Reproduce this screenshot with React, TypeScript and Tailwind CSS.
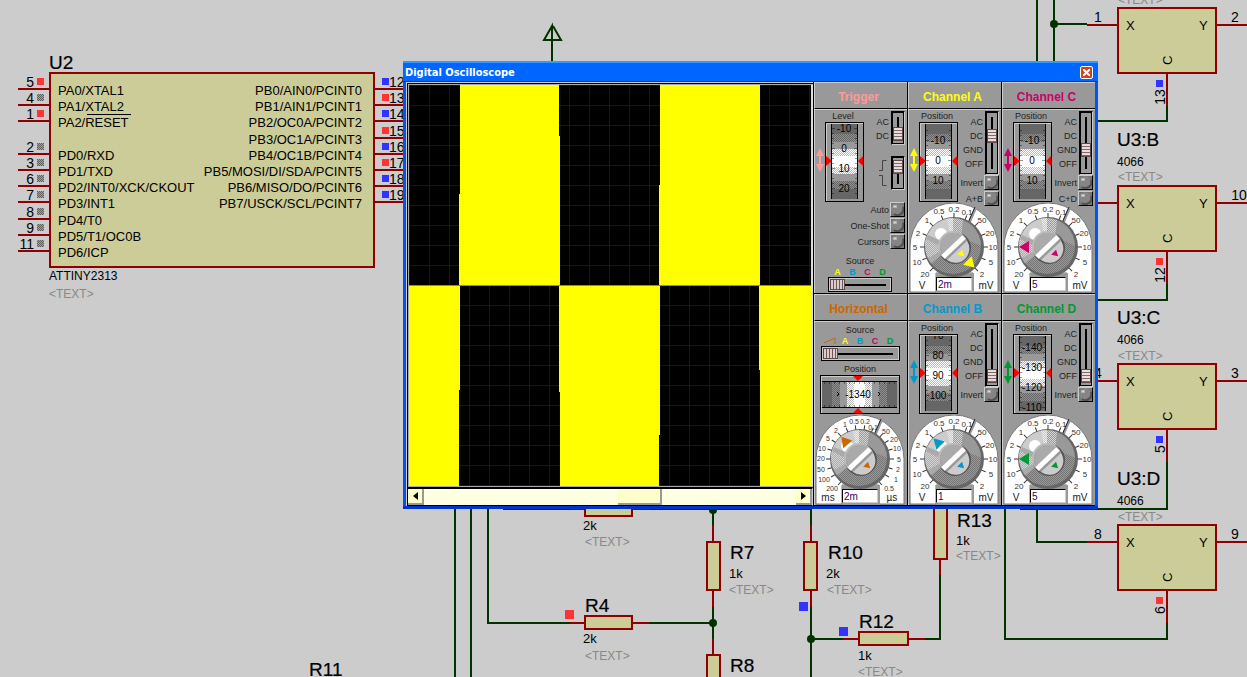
import { useId } from "react";
import clsx from "clsx";

const RED = "#900000";
const GREEN = "#003300";
const HIGH = "#ff3333";
const LOW = "#3333ff";
const FLOATING = "url(#floating)";

/* ---------- Schematic ---------- */

const leftPins = [
  { num: "5", name: "PA0/XTAL1", y: 89, state: HIGH },
  { num: "4", name: "PA1/XTAL2", y: 105, state: FLOATING },
  { num: "1", name: "PA2/RESET", y: 121, state: HIGH },
  { num: "2", name: "PD0/RXD", y: 154, state: FLOATING },
  { num: "3", name: "PD1/TXD", y: 170, state: FLOATING },
  { num: "6", name: "PD2/INT0/XCK/CKOUT", y: 186, state: FLOATING },
  { num: "7", name: "PD3/INT1", y: 202, state: FLOATING },
  { num: "8", name: "PD4/T0", y: 219, state: FLOATING },
  { num: "9", name: "PD5/T1/OC0B", y: 235, state: FLOATING },
  { num: "11", name: "PD6/ICP", y: 251, state: FLOATING },
];

const rightPins = [
  { num: "12", name: "PB0/AIN0/PCINT0", y: 89, state: LOW },
  { num: "13", name: "PB1/AIN1/PCINT1", y: 105, state: HIGH },
  { num: "14", name: "PB2/OC0A/PCINT2", y: 121, state: LOW },
  { num: "15", name: "PB3/OC1A/PCINT3", y: 138, state: HIGH },
  { num: "16", name: "PB4/OC1B/PCINT4", y: 154, state: LOW },
  { num: "17", name: "PB5/MOSI/DI/SDA/PCINT5", y: 170, state: HIGH },
  { num: "18", name: "PB6/MISO/DO/PCINT6", y: 186, state: LOW },
  { num: "19", name: "PB7/USCK/SCL/PCINT7", y: 202, state: LOW },
];

const switches = [
  { y: 8, pinX: "1", pinY: "2", pinC: "13", state: LOW },
  { y: 186, name: "U3:B", pinX: "", pinY: "10", pinC: "12", state: HIGH },
  { y: 364, name: "U3:C", pinX: "4", pinY: "3", pinC: "5", state: LOW },
  { y: 525, name: "U3:D", pinX: "8", pinY: "9", pinC: "6", state: HIGH },
];

const wires = [
  "M1037 0V62",
  "M1054 0V62",
  "M1054 24H1087",
  "M1167 106V121H1090",
  "M1167 284V300H1090",
  "M1167 462V509H1020",
  "M1167 623V639H1005V508",
  "M1037 508V542H1087",
  "M552 61V26L544 40H561L553 26",
  "M455 508V677",
  "M471 508V677",
  "M488 508V623H570",
  "M649 623H713",
  "M503 509H570",
  "M650 509H811V525",
  "M713 509V525",
  "M713 607V639",
  "M811 607V677",
  "M811 639H843",
  "M925 639H940V575",
];

const leads = [
  "M570 509H650",
  "M570 623H649",
  "M713 525V607",
  "M713 639V660",
  "M811 525V607",
  "M843 639H925",
  "M940 575V550",
];

const resistors = [
  { x: 585, y: 503, w: 47, h: 13 },
  { x: 585, y: 616, w: 47, h: 13 },
  { x: 707, y: 542, w: 13, h: 48 },
  { x: 707, y: 655, w: 13, h: 48 },
  { x: 804, y: 542, w: 13, h: 48 },
  { x: 859, y: 632, w: 49, h: 13 },
  { x: 934, y: 508, w: 13, h: 51 },
];

const junctions = [
  [1054, 24],
  [713, 510],
  [713, 623],
  [811, 639],
];

const probes = [
  { x: 565, y: 610, state: HIGH },
  { x: 799, y: 602, state: LOW },
  { x: 839, y: 627, state: LOW },
];

const refs: [string, number, number][] = [
  ["U2", 49, 69],
  ["R4", 585, 612],
  ["R7", 730, 559],
  ["R8", 730, 672],
  ["R10", 828, 559],
  ["R12", 859, 628],
  ["R13", 957, 527],
  ["R11", 309, 676],
];

const values: [string, number, number][] = [
  ["2k", 583, 530],
  ["2k", 583, 643],
  ["1k", 729, 578],
  ["2k", 826, 578],
  ["1k", 858, 660],
  ["1k", 956, 545],
];

const placeholders = [
  [49, 298],
  [585, 546],
  [585, 660],
  [729, 594],
  [827, 594],
  [858, 676],
  [956, 560],
  [1118, 4],
  [1118, 181],
  [1118, 360],
  [1118, 521],
];

function Schematic() {
  return (
    <svg
      width="1247"
      height="677"
      className="absolute top-0 left-0 overflow-visible"
      fontFamily="'Liberation Sans', Arial, sans-serif"
    >
      <defs>
        <pattern id="floating" width="2" height="2" patternUnits="userSpaceOnUse">
          <rect width="2" height="2" fill="#a0a0a0" />
          <path d="M0 0h1v1h1v1h-1v-1h-1z" fill="#606060" />
        </pattern>
        <pattern id="dither-light" width="2" height="2" patternUnits="userSpaceOnUse">
          <path d="M0 0h1v1h-1zM1 1h1v1h-1z" fill="#ffffff" />
        </pattern>
        <pattern id="dither-dark" width="2" height="2" patternUnits="userSpaceOnUse">
          <path d="M0 0h1v1h-1zM1 1h1v1h-1z" fill="#666666" />
        </pattern>
      </defs>

      <g fill="none" stroke={GREEN} strokeWidth="2">
        {wires.map((d) => (
          <path key={d} d={d} />
        ))}
      </g>
      <g fill="none" stroke={RED} strokeWidth="2">
        {leads.map((d) => (
          <path key={d} d={d} />
        ))}
      </g>
      {junctions.map(([x, y]) => (
        <circle key={`${x}-${y}`} cx={x} cy={y} r="4" fill={GREEN} />
      ))}
      {resistors.map((r) => (
        <rect
          key={`${r.x}-${r.y}`}
          x={r.x}
          y={r.y}
          width={r.w}
          height={r.h}
          fill="#cccc99"
          stroke={RED}
          strokeWidth="2"
        />
      ))}
      {probes.map((p) => (
        <rect key={p.x} x={p.x} y={p.y} width="9" height="9" fill={p.state} />
      ))}

      {/* Microcontroller */}
      <rect x="50" y="73" width="324" height="194" fill="#cccc99" stroke={RED} strokeWidth="2" />
      {leftPins.map((pin) => (
        <g key={pin.num}>
          <path d={`M18 ${pin.y}H49`} stroke={RED} strokeWidth="2" />
          <rect x="37" y={pin.y - 11} width="7" height="7" fill={pin.state} />
          <text x="34" y={pin.y - 2} fontSize="14" textAnchor="end">
            {pin.num}
          </text>
          <text x="58" y={pin.y + 6} fontSize="13">
            {pin.name}
          </text>
        </g>
      ))}
      <path d="M87 114.500H131" stroke="#000" />
      {rightPins.map((pin) => (
        <g key={pin.num}>
          <path d={`M375 ${pin.y}H404`} stroke={RED} strokeWidth="2" />
          <rect x="382" y={pin.y - 11} width="7" height="7" fill={pin.state} />
          <text x="389" y={pin.y - 2} fontSize="14">
            {pin.num}
          </text>
          <text x="362" y={pin.y + 6} fontSize="13" textAnchor="end">
            {pin.name}
          </text>
        </g>
      ))}
      <text x="49" y="280" fontSize="12">
        ATTINY2313
      </text>

      {/* Analogue switches */}
      {switches.map((s) => (
        <g key={s.y} fontSize="13">
          <path
            d={`M1087 ${s.y + 17}H1118M1216 ${s.y + 17}H1247M1167 ${s.y + 65}V${s.y + 98}`}
            stroke={RED}
            strokeWidth="2"
          />
          <rect x="1118" y={s.y} width="98" height="65" fill="#cccc99" stroke={RED} strokeWidth="2" />
          <text x="1126" y={s.y + 22}>
            X
          </text>
          <text x="1199" y={s.y + 22}>
            Y
          </text>
          <text transform={`translate(1172 ${s.y + 57}) rotate(-90)`}>C</text>
          <text x="1098" y={s.y + 14} fontSize="14" textAnchor="middle">
            {s.pinX}
          </text>
          <text x={s.pinY.length > 1 ? 1239 : 1235} y={s.y + 14} fontSize="14" textAnchor="middle">
            {s.pinY}
          </text>
          <rect x="1156" y={s.y + 72} width="7" height="7" fill={s.state} />
          <text
            transform={`translate(1165 ${s.pinC.length > 1 ? s.y + 89 : s.y + 85}) rotate(-90)`}
            fontSize="14"
            textAnchor="middle"
          >
            {s.pinC}
          </text>
          {s.name && (
            <>
              <text x="1117" y={s.y - 40} fontSize="19" stroke="#000" strokeWidth="0.200">
                {s.name}
              </text>
              <text x="1117" y={s.y - 20} fontSize="12">
                4066
              </text>
            </>
          )}
        </g>
      ))}

      <g fontSize="19" stroke="#000" strokeWidth="0.200">
        {refs.map(([label, x, y]) => (
          <text key={label} x={x} y={y}>
            {label}
          </text>
        ))}
      </g>
      <g fontSize="13">
        {values.map(([label, x, y]) => (
          <text key={`${x}-${y}`} x={x} y={y}>
            {label}
          </text>
        ))}
      </g>
      <g fontSize="12" fill="#888888">
        {placeholders.map(([x, y]) => (
          <text key={`${x}-${y}`} x={x} y={y}>
            {"<TEXT>"}
          </text>
        ))}
      </g>
    </svg>
  );
}

/* ---------- Oscilloscope controls ---------- */

function Screen() {
  const lines = Array.from({ length: 21 }, (_, i) => i * 20);
  return (
    <svg width="402" height="401" className="block bg-black" shapeRendering="crispEdges">
      {lines.map((n) => (
        <path key={n} d={`M${n + 0.5} 0V401M0 ${n + 0.5}H402`} stroke="#002800" />
      ))}
      <g fill="#ffff00">
        <path d="M51 0H150V51H151V200H50V109H51z" />
        <path d="M251 0H351V200H250V100H251z" />
        <path d="M0 201H51V305H50V401H0z" />
        <path d="M150 201H251V350H250V401H151V307H150z" />
        <path d="M350 201H402V401H351V285H350z" />
      </g>
      <path d="M0 200.500H402" stroke="#cc6666" />
    </svg>
  );
}

function VSwitch({ label, max, value }: { label: string; max: number; value: number }) {
  return (
    <div
      className={clsx(
        "w-[14px] shrink-0 border border-black border-r-[#ccc] border-b-[#ccc] bg-[#999] bg-[linear-gradient(#000,#000)] bg-center bg-no-repeat py-[3px] outline-1 -outline-offset-2 outline-black",
        max === 3 ? "h-[64px] bg-[length:2px_52px]" : "h-[34px] bg-[length:2px_22px]"
      )}
    >
      <input
        type="range"
        aria-label={label}
        min={0}
        max={max}
        defaultValue={value}
        className="block h-full w-[12px] appearance-none bg-transparent [writing-mode:vertical-lr] [&::-webkit-slider-thumb]:h-[14px] [&::-webkit-slider-thumb]:w-[10px] [&::-webkit-slider-thumb]:appearance-none [&::-webkit-slider-thumb]:border [&::-webkit-slider-thumb]:border-[#604848] [&::-webkit-slider-thumb]:bg-[repeating-linear-gradient(#e8dcdc_0px_2px,#806868_2px_3px)]"
      />
    </div>
  );
}

function HSwitch({ label, max, wide }: { label: string; max: number; wide?: boolean }) {
  return (
    <div
      className={clsx(
        "h-[15px] border border-black bg-[#999] bg-[linear-gradient(#000,#000)] bg-center bg-no-repeat px-px outline-1 -outline-offset-2 outline-[#ccc]",
        wide ? "w-[79px] bg-[length:66px_2px]" : "w-[64px] bg-[length:52px_2px]"
      )}
    >
      <input
        type="range"
        aria-label={label}
        min={0}
        max={max}
        defaultValue={0}
        className="block h-[13px] w-full appearance-none bg-transparent [&::-webkit-slider-thumb]:h-[11px] [&::-webkit-slider-thumb]:w-[15px] [&::-webkit-slider-thumb]:appearance-none [&::-webkit-slider-thumb]:border [&::-webkit-slider-thumb]:border-[#604848] [&::-webkit-slider-thumb]:bg-[repeating-linear-gradient(90deg,#dccccc_0px_2px,#705858_2px_3px)]"
      />
    </div>
  );
}

function PushButton({ label }: { label: string }) {
  const id = useId();
  return (
    <div className="flex h-4 items-start justify-end gap-px">
      <label htmlFor={id} className="leading-4 whitespace-nowrap">
        {label}
      </label>
      <button
        id={id}
        type="button"
        className="size-[15px] shrink-0 border border-t-[#ccc] border-r-black border-b-black border-l-[#ccc] bg-[#777]"
      >
        <svg viewBox="0 0 13 13" className="block size-[13px]">
          <circle cx="6" cy="6" r="6" fill="#858585" />
          <path d="M12 4A6 6 0 0 1 3 11" fill="none" stroke="#505050" strokeWidth="2" />
          <path d="M3 2v3M5 2v3M3 3.500h2" stroke="#ddd" fill="none" />
        </svg>
      </button>
    </div>
  );
}

const bands = [
  { at: 0, size: 10, fill: "#666666" },
  { at: 10, size: 8, fill: "#909090", dither: "url(#dither-dark)" },
  { at: 18, size: 7, fill: "#999999" },
  { at: 25, size: 7, fill: "#bbbbbb", dither: "url(#dither-light)" },
  { at: 32, size: 11, fill: "#ffffff" },
  { at: 43, size: 7, fill: "#bbbbbb", dither: "url(#dither-light)" },
  { at: 50, size: 7, fill: "#999999" },
  { at: 57, size: 8, fill: "#909090", dither: "url(#dither-dark)" },
  { at: 65, size: 10, fill: "#666666" },
];

type Mark = [string, number];

function Wheel({ label, marks }: { label: string; marks: Mark[] }) {
  return (
    <div className="relative h-[80px] w-[39px]">
      <svg width="39" height="80" className="block">
        <g shapeRendering="crispEdges">
          <path d="M0 0h39v80h-39z" fill="#000" />
          <path d="M1 1h37v78h-37z" fill="#ccc" />
          <path d="M2 2h36v77h-36z" fill="#999" />
          <rect x="6" y="2" width="27" height="75" fill="#000" />
        </g>
        <svg x="7" y="2" width="25" height="75">
          {bands.map((b) => (
            <g key={b.at} shapeRendering="crispEdges">
              <rect y={b.at} width="25" height={b.size} fill={b.fill} />
              {b.dither && <rect y={b.at} width="25" height={b.size} fill={b.dither} />}
            </g>
          ))}
          {marks.map(([text, y]) =>
            [-10, -5, 0, 5].map((d) => (
              <path
                key={`${text}${d}`}
                d={`M0 ${y + d + 0.5}h${d ? 2 : 3}M25 ${y + d + 0.5}h${d ? -2 : -3}`}
                stroke="#000"
                opacity="0.4"
              />
            ))
          )}
          <g fontSize="10" textAnchor="middle">
            {marks.map(([text, y]) => (
              <text key={text} x="12" y={y + 4}>
                {text}
              </text>
            ))}
          </g>
        </svg>
        <path d="M1 34l6 5-6 5zM38 34l-5 5 5 5z" fill="#f00" />
      </svg>
      <input type="range" aria-label={label} className="absolute inset-0 h-full w-full opacity-0" />
    </div>
  );
}

function HWheel() {
  return (
    <div className="relative h-[39px] w-[80px]">
      <svg width="80" height="39" className="block">
        <g shapeRendering="crispEdges">
          <path d="M0 0h80v39h-80z" fill="#000" />
          <path d="M1 1h78v37h-78z" fill="#ccc" />
          <path d="M2 2h77v36h-77z" fill="#999" />
          <rect x="2" y="6" width="75" height="27" fill="#000" />
          {bands.map((b) => (
            <g key={b.at}>
              <rect x={b.at + 2} y="7" width={b.size} height="25" fill={b.fill} />
              {b.dither && <rect x={b.at + 2} y="7" width={b.size} height="25" fill={b.dither} />}
            </g>
          ))}
        </g>
        {Array.from({ length: 15 }, (_, i) => (
          <path key={i} d={`M${i * 5 + 4.5} 7v2M${i * 5 + 4.5} 32v-2`} stroke="#000" opacity="0.4" />
        ))}
        <text x="38" y="23" fontSize="10" textAnchor="middle">
          -1340
        </text>
        <path d="M17 17l2 2-2 2M58 17l2 2-2 2" fill="none" stroke="#000" />
        <path d="M33 1h10l-5 5zM33 38h10l-5-5z" fill="#f00" />
      </svg>
      <input type="range" aria-label="Horizontal position" className="absolute inset-0 h-full w-full opacity-0" />
    </div>
  );
}

function UpDown({ color }: { color: string }) {
  return (
    <svg width="8" height="24" className="mt-[26px] block shrink-0">
      <path d="M4 0l4 8H0zM4 24l4-8H0z" fill={color} />
      <path d="M4 6v12" stroke={color} strokeWidth="2" />
    </svg>
  );
}

type DialMark = { text: string; angle: number; x: number; y: number };

const voltMarks: DialMark[] = [
  { text: "20", angle: -135, x: 16, y: 71 },
  { text: "10", angle: -112, x: 8, y: 59 },
  { text: "5", angle: -90, x: 6, y: 44 },
  { text: "2", angle: -67, x: 9, y: 30 },
  { text: "1", angle: -45, x: 18, y: 17 },
  { text: "0.5", angle: -22, x: 30, y: 8 },
  { text: "0.2", angle: 0, x: 45, y: 6 },
  { text: "0.1", angle: 22, x: 58, y: 9 },
  { text: "50", angle: 45, x: 73, y: 17 },
  { text: "20", angle: 67, x: 81, y: 30 },
  { text: "10", angle: 90, x: 84, y: 44 },
  { text: "5", angle: 112, x: 82, y: 59 },
  { text: "2", angle: 135, x: 73, y: 71 },
];

const timeMarks: DialMark[] = [
  { text: "200", angle: -140, x: 17, y: 73 },
  { text: "100", angle: -122, x: 9, y: 64 },
  { text: "50", angle: -107, x: 6, y: 54 },
  { text: "20", angle: -90, x: 6, y: 43 },
  { text: "10", angle: -73, x: 7, y: 33 },
  { text: "5", angle: -56, x: 13, y: 23 },
  { text: "2", angle: -40, x: 21, y: 15 },
  { text: "1", angle: -24, x: 30, y: 9 },
  { text: "0.5", angle: -8, x: 39, y: 6 },
  { text: "0.2", angle: 8, x: 50, y: 6 },
  { text: "0.1", angle: 23, x: 58, y: 12 },
  { text: "50", angle: 42, x: 71, y: 16 },
  { text: "20", angle: 57, x: 79, y: 24 },
  { text: "10", angle: 73, x: 82, y: 33 },
  { text: "5", angle: 90, x: 84, y: 44 },
  { text: "2", angle: 107, x: 83, y: 54 },
  { text: "1", angle: 122, x: 81, y: 64 },
  { text: "0.5", angle: 140, x: 74, y: 73 },
];

type DialProps = {
  label: string;
  marks: DialMark[];
  units: [string, string];
  value: string;
  angle: number;
  color: string;
};

function Dial({ label, marks, units, value, angle, color }: DialProps) {
  const dense = marks.length > 13;
  return (
    <div className="relative h-[90px] w-[90px]">
      <svg width="90" height="90" className="block">
        <path d="M1 89V44A44 44 0 0 1 89 44V89H64V70H27V89z" fill="#fff" stroke="#777" />
        <path d="M27 70h38v20h-38z" fill="#999" />
        <path d="M60 20L67 4" stroke="#999" strokeWidth="3" />
        <path d="M59 20L66 4" stroke="#222" />
        {marks.map((m) => (
          <path
            key={m.angle}
            d="M0 -29v-5"
            transform={`translate(45 44) rotate(${m.angle})`}
            stroke="#333"
          />
        ))}
        <g fontSize={dense ? 7 : 8} textAnchor="middle" fill="#333">
          {marks.map((m) => (
            <text key={m.angle} x={m.x} y={m.y + 3}>
              {m.text}
            </text>
          ))}
        </g>
        <g fontSize="10" textAnchor="middle" fill="#222">
          <text x="13" y="86">
            {units[0]}
          </text>
          <text x="77" y="86">
            {units[1]}
          </text>
        </g>

        {/* Outer knob */}
        <circle cx="45" cy="44" r="30" fill="#666" />
        <circle cx="44" cy="43" r="28" fill="#999" />
        <path d="M73 43A28 28 0 0 1 22 61L32 52L56 36z" fill="url(#dither-dark)" opacity="0.7" />
        <path d="M16 43A28 28 0 0 1 44 15L44 43z" fill="#ccc" />
        <path d="M16 43A28 28 0 0 1 19 32L44 43L22 60A28 28 0 0 1 16 43z" fill="#aaa" />
        <path d="M17 36A28 28 0 0 0 19 55L36 46z" fill="url(#dither-light)" opacity="0.5" />
        <path d="M38 16A28 28 0 0 1 54 17L52 36L42 36z" fill="url(#dither-light)" opacity="0.6" />
        <circle cx="32" cy="31" r="6" fill="#fff" />
        <path
          d="M0 -29l6 10h-12z"
          transform={`translate(45 44) rotate(${angle})`}
          fill={color}
        />

        {/* Inner knob */}
        <circle cx="46" cy="45" r="16" fill="#555" />
        <circle cx="44" cy="43" r="15" fill="#bbb" />
        <circle cx="45" cy="44" r="14" fill="#999" />
        <path d="M35 54L55 34A14 14 0 0 0 31 44z" fill="#aaa" />
        <path d="M38 57L58 38A14 14 0 0 1 38 57z" fill="#ccc" />
        <path d="M34 54L55 34" stroke="#fff" strokeWidth="5" />
        <path d="M0 -13l4 6h-7z" transform="translate(46 44) rotate(135)" fill={color} />
      </svg>
      <input
        type="text"
        aria-label={label}
        defaultValue={value}
        className="absolute top-[74px] left-[27px] h-[14px] w-[36px] border border-t-black border-r-[#ccc] border-b-[#ccc] border-l-black bg-white px-px text-[10px] leading-[12px] text-[#330066]"
      />
    </div>
  );
}

function Panel({ title, color, children }: { title: string; color: string; children: React.ReactNode }) {
  return (
    <section className="flex h-[212px] w-[94px] flex-col border-b border-l border-black">
      <h2
        className="flex h-[27px] shrink-0 items-center justify-center border-t border-b border-l border-t-[#ccc] border-b-black border-l-[#ccc] pt-[3px] pr-[5px] text-[12px] leading-[16px] font-bold"
        style={{ color }}
      >
        {title}
      </h2>
      <div className="flex flex-1 flex-col border-t border-l border-[#ccc] pr-[2px]">{children}</div>
    </section>
  );
}

function PositionWheel({ label, name, color, marks }: { label: string; name: string; color: string; marks: Mark[] }) {
  return (
    <div className="w-[49px] shrink-0">
      <div className="pl-[7px] text-center leading-[12px]">{name}</div>
      <div className="flex gap-px pl-px">
        <UpDown color={color} />
        <Wheel label={label} marks={marks} />
      </div>
    </div>
  );
}

type ChannelProps = {
  id: string;
  color: string;
  marks: Mark[];
  coupling: number;
  sum?: string;
  value: string;
  angle: number;
};

function Channel({ id, color, marks, coupling, sum, value, angle }: ChannelProps) {
  return (
    <Panel title={`Channel ${id}`} color={color}>
      <div className="flex h-[93px]">
        <PositionWheel label={`Channel ${id} position`} name="Position" color={color} marks={marks} />
        <div className="flex w-[41px] shrink-0 flex-col pt-px">
          <div className="flex justify-end gap-[2px]">
            <div className="pt-[4px] text-right leading-[14px]">
              <div>AC</div>
              <div>DC</div>
              <div>GND</div>
              <div>OFF</div>
            </div>
            <VSwitch label={`Channel ${id} coupling`} max={3} value={coupling} />
          </div>
          <PushButton label="Invert" />
          {sum && <PushButton label={sum} />}
        </div>
      </div>
      <Dial
        label={`Channel ${id} scale`}
        marks={voltMarks}
        units={["V", "mV"]}
        value={value}
        angle={angle}
        color={color}
      />
    </Panel>
  );
}

function SourceLetters({ ramp }: { ramp?: boolean }) {
  return (
    <div className="flex text-center leading-[10px] font-bold">
      {ramp && (
        <svg width="15" height="10" className="block">
          <path d="M1 7L12 2V8" fill="none" stroke="#cc6600" />
        </svg>
      )}
      <span className="w-[15px] text-[#ffff00]">A</span>
      <span className="w-[15px] text-[#0099cc]">B</span>
      <span className="w-[15px] text-[#cc0066]">C</span>
      <span className="w-[15px] text-[#009933]">D</span>
    </div>
  );
}

function Trigger() {
  return (
    <Panel title="Trigger" color="#ff9999">
      <div className="flex h-[92px]">
        <PositionWheel
          label="Trigger level"
          name="Level"
          color="#ff9999"
          marks={[
            ["-10", 4],
            ["0", 24],
            ["10", 44],
            ["20", 64],
          ]}
        />
        <div className="flex w-[41px] flex-col gap-[11px] pt-px">
          <div className="flex justify-end gap-[2px]">
            <div className="pt-[4px] text-right leading-[14px]">
              <div>AC</div>
              <div>DC</div>
            </div>
            <VSwitch label="Trigger coupling" max={1} value={1} />
          </div>
          <div className="flex justify-end gap-[3px]">
            <svg width="9" height="34" className="block">
              <path d="M0 14.500h3.500V4.500h4M0 19.500h3.500V29.500h4" fill="none" stroke="#444" />
            </svg>
            <VSwitch label="Trigger edge" max={1} value={0} />
          </div>
        </div>
      </div>
      <PushButton label="Auto" />
      <PushButton label="One-Shot" />
      <PushButton label="Cursors" />
      <div className="flex flex-col items-center pt-[5px]">
        <div className="leading-[12px]">Source</div>
        <SourceLetters />
        <HSwitch label="Trigger source" max={3} />
      </div>
    </Panel>
  );
}

function Horizontal() {
  return (
    <Panel title="Horizontal" color="#cc6600">
      <div className="flex flex-col items-center pt-[2px]">
        <div className="leading-[12px]">Source</div>
        <SourceLetters ramp />
        <HSwitch label="Horizontal source" max={4} wide />
        <div className="pt-[2px] leading-[12px]">Position</div>
        <HWheel />
      </div>
      <div className="mt-auto">
        <Dial
          label="Timebase"
          marks={timeMarks}
          units={["ms", "µs"]}
          value="2m"
          angle={-40}
          color="#cc6600"
        />
      </div>
    </Panel>
  );
}

function ScrollBar() {
  const arrow =
    "flex h-[16px] w-[16px] shrink-0 items-center justify-center border-r-2 border-b-2 border-[#999] bg-[#ffffcc]";
  return (
    <div className="flex h-[16px] bg-[#ffffe1]">
      <button type="button" aria-label="Scroll left" className={arrow}>
        <svg width="5" height="8">
          <path d="M5 0v8L0 4z" />
        </svg>
      </button>
      <input
        type="range"
        aria-label="Scroll"
        min={0}
        max={100}
        defaultValue={59}
        className="block h-[16px] min-w-0 flex-1 appearance-none bg-transparent [&::-webkit-slider-thumb]:h-[16px] [&::-webkit-slider-thumb]:w-[44px] [&::-webkit-slider-thumb]:appearance-none [&::-webkit-slider-thumb]:border-r-2 [&::-webkit-slider-thumb]:border-b-2 [&::-webkit-slider-thumb]:border-[#999] [&::-webkit-slider-thumb]:bg-[#ffffcc]"
      />
      <button type="button" aria-label="Scroll right" className={arrow}>
        <svg width="5" height="8">
          <path d="M0 0v8L5 4z" />
        </svg>
      </button>
    </div>
  );
}

function Oscilloscope() {
  return (
    <div className="absolute top-[61px] left-[403px] flex w-[695px] flex-col border-b-[3px] border-[#0033cc] bg-[#0055ee] px-[3px]">
      <header className="-mx-[3px] flex h-[21px] items-center justify-between border-t-2 border-b border-t-[#3399ff] border-b-[#0033aa] bg-[#0066ff] pr-[5px] pl-[2px]">
        <h1 className="pt-px font-['DejaVu_Sans_Condensed','Noto_Sans',sans-serif] text-[11px] leading-[16px] font-bold text-white">
          Digital Oscilloscope
        </h1>
        <button
          type="button"
          aria-label="Close"
          className="flex size-[13px] items-center justify-center rounded-[2px] border border-white bg-[#cc4422]"
        >
          <svg width="7" height="7">
            <path d="M0 0L7 7M7 0L0 7" stroke="#fff" strokeWidth="2" />
          </svg>
        </button>
      </header>
      <div className="flex bg-[#999]">
        <div className="flex-1 border-t border-l border-[#ccc]">
          <div className="border-t border-l border-black">
            <div className="border-t border-r-2 border-b border-l border-[#aaa] border-r-[#ddd]">
              <Screen />
            </div>
            <div className="border-t-2 border-r border-b border-t-black border-r-[#ccc] border-b-black">
              <ScrollBar />
            </div>
          </div>
        </div>
        <div className="grid grid-cols-3 text-[9px] text-[#222]">
          <Trigger />
          <Channel
            id="A"
            color="#ffff00"
            marks={[
              ["-10", 16],
              ["0", 36],
              ["10", 56],
            ]}
            coupling={1}
            sum="A+B"
            value="2m"
            angle={135}
          />
          <Channel
            id="C"
            color="#cc0066"
            marks={[
              ["-10", 16],
              ["0", 36],
              ["10", 56],
            ]}
            coupling={2}
            sum="C+D"
            value="5"
            angle={-90}
          />
          <Horizontal />
          <Channel
            id="B"
            color="#0099cc"
            marks={[
              ["70", -1],
              ["80", 19],
              ["90", 39],
              ["100", 59],
            ]}
            coupling={3}
            value="1"
            angle={-45}
          />
          <Channel
            id="D"
            color="#009933"
            marks={[
              ["-140", 11],
              ["-130", 31],
              ["-120", 51],
              ["-110", 71],
            ]}
            coupling={3}
            value="5"
            angle={-90}
          />
        </div>
      </div>
    </div>
  );
}

export default function App() {
  return (
    <main className="relative min-h-screen overflow-hidden bg-[#cccccc] font-['Liberation_Sans',Arial,sans-serif] text-black">
      <Schematic />
      <Oscilloscope />
    </main>
  );
}
